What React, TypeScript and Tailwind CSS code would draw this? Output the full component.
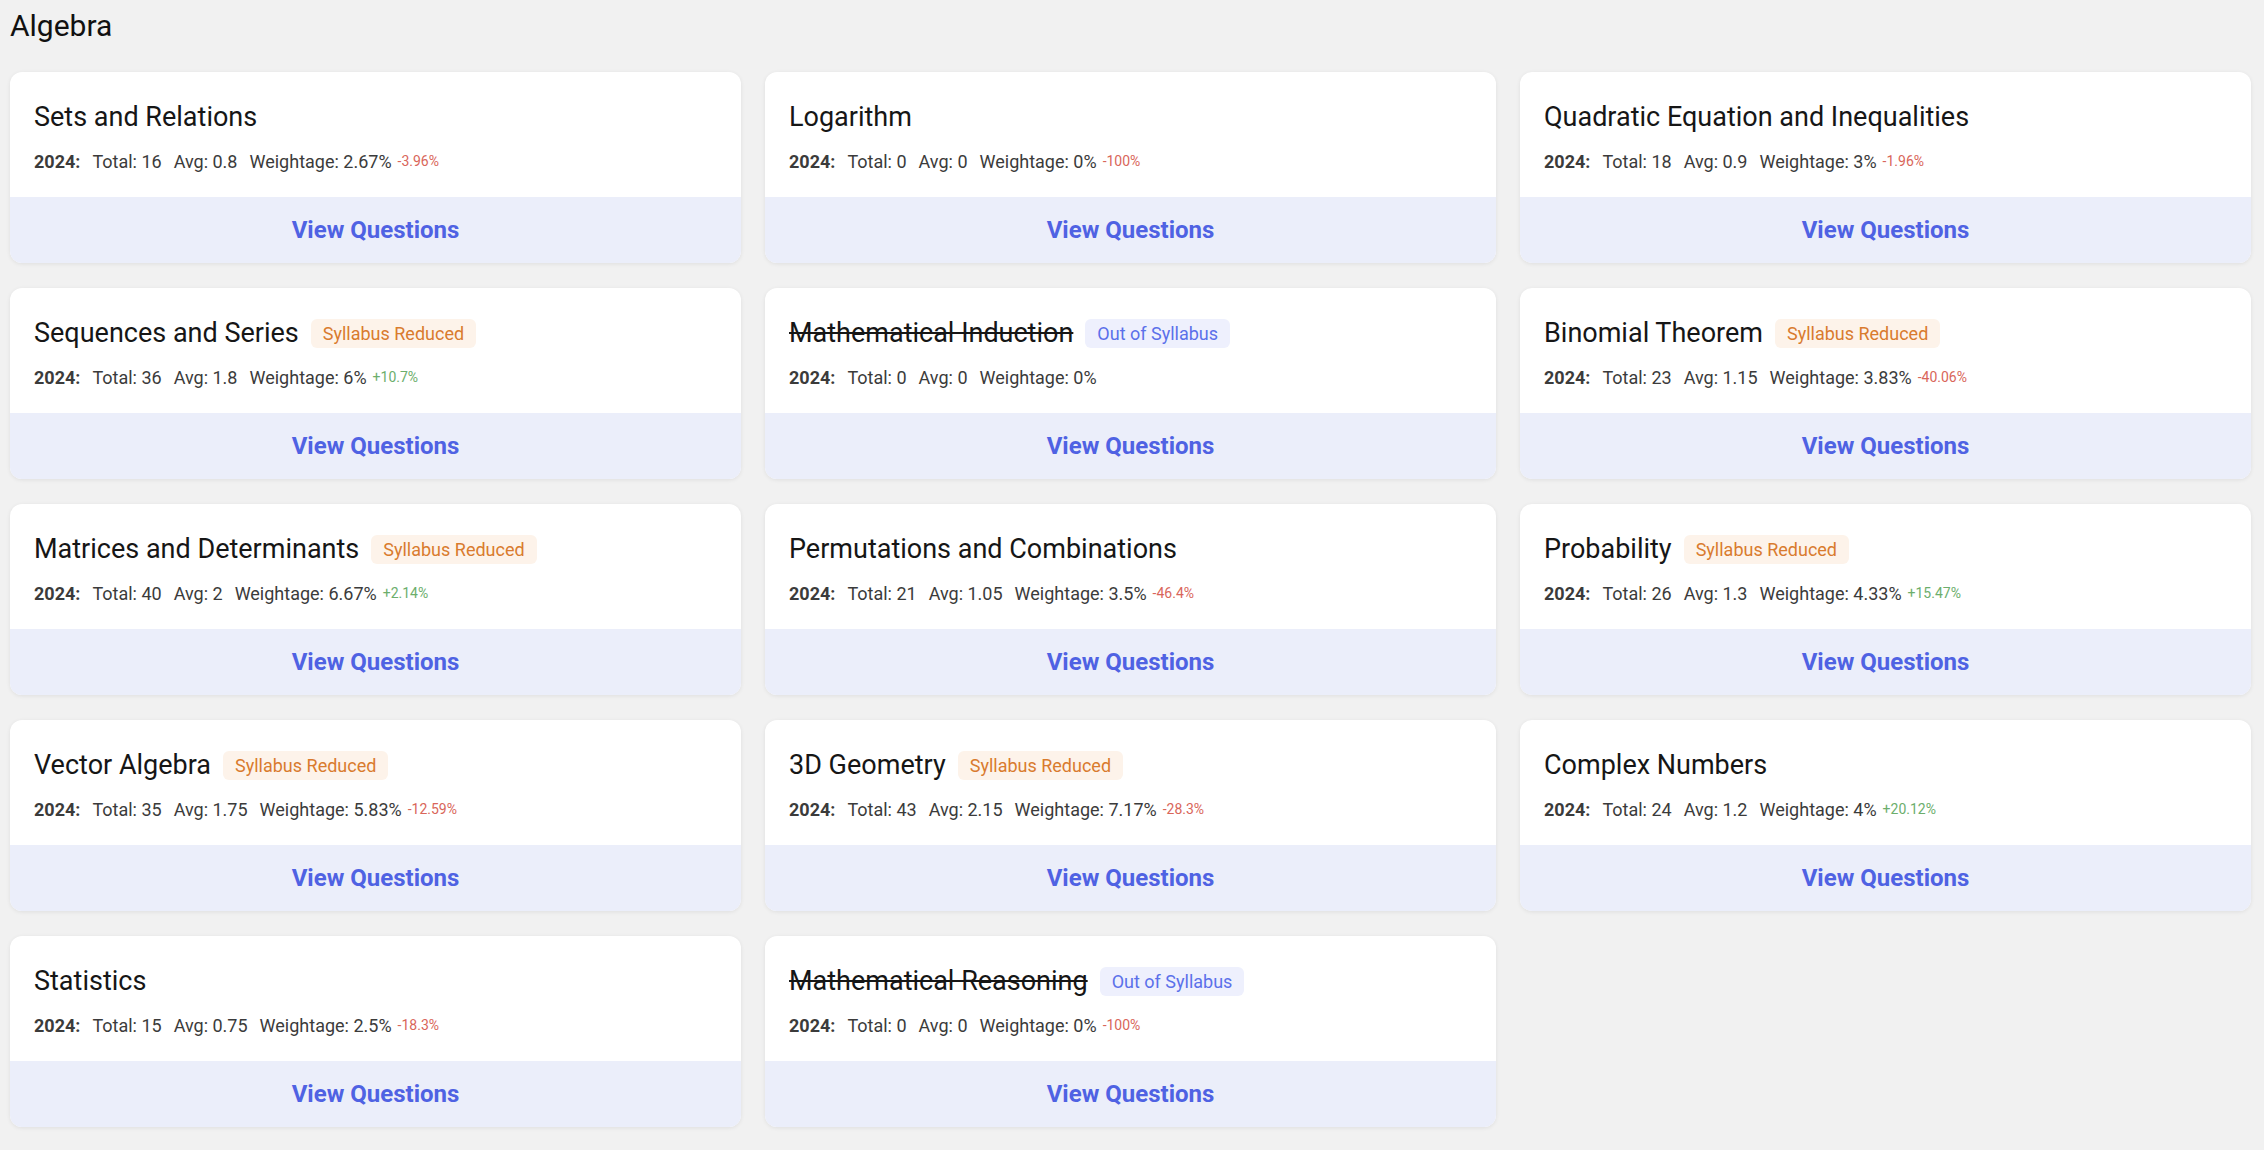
import React from 'react';

type Topic = {
  name: string;
  total: number;
  avg: string;
  weight: string;
  change?: string;
  badge?: 'reduced' | 'out';
};

const topics: Topic[] = [
  { name: 'Sets and Relations', total: 16, avg: '0.8', weight: '2.67%', change: '-3.96%' },
  { name: 'Logarithm', total: 0, avg: '0', weight: '0%', change: '-100%' },
  { name: 'Quadratic Equation and Inequalities', total: 18, avg: '0.9', weight: '3%', change: '-1.96%' },
  { name: 'Sequences and Series', total: 36, avg: '1.8', weight: '6%', change: '+10.7%', badge: 'reduced' },
  { name: 'Mathematical Induction', total: 0, avg: '0', weight: '0%', badge: 'out' },
  { name: 'Binomial Theorem', total: 23, avg: '1.15', weight: '3.83%', change: '-40.06%', badge: 'reduced' },
  { name: 'Matrices and Determinants', total: 40, avg: '2', weight: '6.67%', change: '+2.14%', badge: 'reduced' },
  { name: 'Permutations and Combinations', total: 21, avg: '1.05', weight: '3.5%', change: '-46.4%' },
  { name: 'Probability', total: 26, avg: '1.3', weight: '4.33%', change: '+15.47%', badge: 'reduced' },
  { name: 'Vector Algebra', total: 35, avg: '1.75', weight: '5.83%', change: '-12.59%', badge: 'reduced' },
  { name: '3D Geometry', total: 43, avg: '2.15', weight: '7.17%', change: '-28.3%', badge: 'reduced' },
  { name: 'Complex Numbers', total: 24, avg: '1.2', weight: '4%', change: '+20.12%' },
  { name: 'Statistics', total: 15, avg: '0.75', weight: '2.5%', change: '-18.3%' },
  { name: 'Mathematical Reasoning', total: 0, avg: '0', weight: '0%', change: '-100%', badge: 'out' },
];

function TopicCard({ topic }: { topic: Topic }) {
  const struck = topic.badge === 'out';
  return (
    <div className="bg-white rounded-[12px] overflow-hidden shadow-[0_1px_4px_rgba(0,0,0,0.08)] flex flex-col">
      <div className="px-6 pt-6 pb-[22px]">
        {/* Title */}
        <div className="flex items-center h-[42px]">
          <span className={`text-[27px] leading-[42px] text-[#161616] ${struck ? 'line-through' : ''}`}>
            {topic.name}
          </span>
          {topic.badge === 'reduced' && (
            <span className="ml-3 px-3 py-1 rounded-[6px] bg-[#fdf3ea] text-[#d97b2e] text-[18px] leading-[21px]">
              Syllabus Reduced
            </span>
          )}
          {topic.badge === 'out' && (
            <span className="ml-3 px-3 py-1 rounded-[6px] bg-[#eef0fd] text-[#5b70ea] text-[18px] leading-[21px]">
              Out of Syllabus
            </span>
          )}
        </div>

        {/* Stats */}
        <div className="mt-[10px] flex items-center text-[18px] leading-[27px] text-[#3b3b3b]">
          <span className="font-bold mr-3">2024:</span>
          <span className="mr-3">Total: {topic.total}</span>
          <span className="mr-3">Avg: {topic.avg}</span>
          <span>Weightage: {topic.weight}</span>
          {topic.change && (
            <span
              className={`ml-[6px] text-[14px] ${
                topic.change.startsWith('+') ? 'text-[#6cae6c]' : 'text-[#d9665a]'
              }`}
            >
              {topic.change}
            </span>
          )}
        </div>
      </div>

      <button className="h-[66px] w-full bg-[#ebeefa] text-[#4f62e3] text-[24px] font-bold">
        View Questions
      </button>
    </div>
  );
}

export default function App() {
  return (
    <div
      className="min-h-screen bg-[#f1f1f1] pl-[10px] pr-[13px] pt-2 pb-5"
      style={{ fontFamily: 'Roboto, "Noto Sans", sans-serif' }}
    >
      <h1 className="text-[30px] leading-9 text-[#111] mb-7">Algebra</h1>
      <div className="grid grid-cols-3 gap-x-6 gap-y-[25px]">
        {topics.map((t) => (
          <TopicCard key={t.name} topic={t} />
        ))}
      </div>
    </div>
  );
}
